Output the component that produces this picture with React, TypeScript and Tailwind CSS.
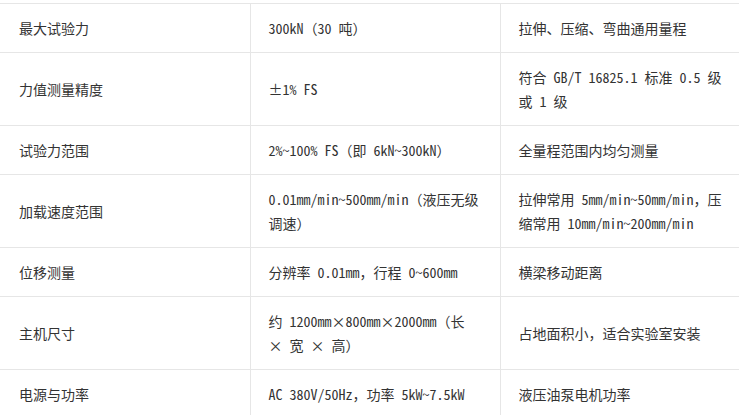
import React from 'react';

const rows: [string, string, string][] = [
    ['最大试验力', '300kN（30 吨）', '拉伸、压缩、弯曲通用量程'],
    ['力值测量精度', '±1% FS', '符合 GB/T 16825.1 标准 0.5 级 或 1 级'],
    ['试验力范围', '2%~100% FS（即 6kN~300kN）', '全量程范围内均匀测量'],
    ['加载速度范围', '0.01mm/min~500mm/min（液压无级调速）', '拉伸常用 5mm/min~50mm/min，压缩常用 10mm/min~200mm/min'],
    ['位移测量', '分辨率 0.01mm，行程 0~600mm', '横梁移动距离'],
    ['主机尺寸', '约 1200mm×800mm×2000mm（长 × 宽 × 高）', '占地面积小，适合实验室安装'],
    ['电源与功率', 'AC 380V/50Hz，功率 5kW~7.5kW', '液压油泵电机功率'],
];

const SpecTable: React.FC = () => {
    return (
        <div className="w-[739px] h-[415px] overflow-hidden bg-white pt-[3px]">
            <table
                className="w-[752px] table-fixed border-collapse text-[14px] leading-6 text-[#333]"
                style={{ fontFamily: '"Noto Sans Mono CJK SC", "Noto Sans CJK SC", monospace' }}
            >
                <colgroup>
                    <col className="w-[250px]" />
                    <col className="w-[250px]" />
                    <col className="w-[252px]" />
                </colgroup>
                <tbody>
                    {rows.map(([name, value, note]) => (
                        <tr key={name} className="border-t border-[#e6e6e6]">
                            <td className="py-3 pl-[19px] pr-4 align-middle">{name}</td>
                            <td className="border-l border-[#e6e6e6] py-3 pl-[18px] pr-[18px] align-middle">{value}</td>
                            <td className="border-l border-[#e6e6e6] py-3 pl-[18px] pr-[18px] align-middle">{note}</td>
                        </tr>
                    ))}
                </tbody>
            </table>
        </div>
    );
};

export default SpecTable;
